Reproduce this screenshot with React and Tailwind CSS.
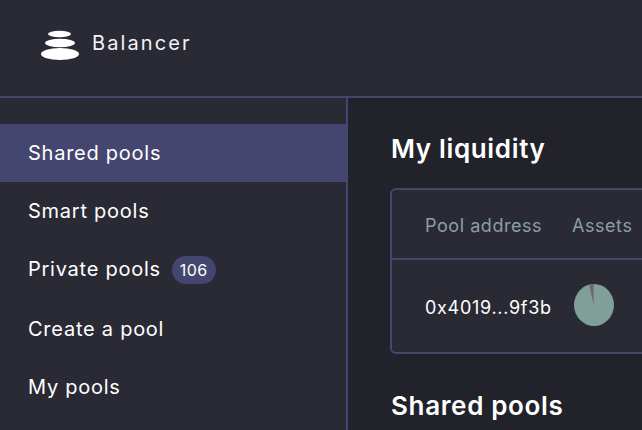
const navItems = [
  { label: "Shared pools", active: true },
  { label: "Smart pools" },
  { label: "Private pools", badge: "106" },
  { label: "Create a pool" },
  { label: "My pools" },
];

function Logo() {
  return (
    <svg width="40" height="34" viewBox="0 0 40 34" className="shrink-0">
      <ellipse cx="19.5" cy="8" rx="11.5" ry="3.2" fill="#fff" />
      <ellipse cx="20" cy="17" rx="15" ry="4.2" fill="#fff" />
      <ellipse cx="20" cy="28" rx="19" ry="6" fill="#fff" />
    </svg>
  );
}

export default function App() {
  return (
    <div className="w-[642px] h-[430px] overflow-hidden bg-[#21222a] text-white font-['Inter',sans-serif]">
      <header className="h-[98px] bg-[#2a2a35] border-b-2 border-[#45466f] pl-[40px] flex items-center gap-[12px] pb-[20px] pt-[10px]">
        <Logo />
        <span className="text-[20px] tracking-[2.1px] text-[#f2f2f4]">Balancer</span>
      </header>
      <div className="flex h-[332px]">
        <nav className="w-[348px] shrink-0 bg-[#2a2a35] border-r-2 border-[#45466f] pt-[26px]">
          {navItems.map((item) => (
            <div
              key={item.label}
              className={`pl-[28px] flex items-center gap-[11px] text-[20px] tracking-[0.75px] ${item.badge ? "h-[60px] pb-[2px]" : "h-[58px]"} ${item.active ? "bg-[#45466f]" : ""}`}
            >
              {item.label}
              {item.badge && (
                <span className="h-[28px] mt-[1px] px-[8px] rounded-full bg-[#45466f] text-[16px] tracking-[0.4px] flex items-center">
                  {item.badge}
                </span>
              )}
            </div>
          ))}
        </nav>
        <main className="flex-1 min-w-0 pl-[42px] pt-[36px]">
          <h2 className="ml-[1px] text-[26px] leading-[30px] font-semibold tracking-[0.65px]">My liquidity</h2>
          <div className="mt-[24px] w-[400px] h-[166px] bg-[#2a2a35] border-2 border-[#45466f] rounded-[6px]">
            <div className="h-[70px] flex items-center pl-[33px] pt-[3px] text-[18px] text-[#8a9ea8] tracking-[0.55px] border-b-2 border-[#45466f]">
              <span className="w-[147px]">Pool address</span>
              <span>Assets</span>
            </div>
            <div className="h-[92px] flex items-center pl-[33px] text-[18px] tracking-[0.7px]">
              <span className="w-[149px] pt-[3px]">0x4019...9f3b</span>
              <svg width="40" height="42" viewBox="0 0 40 42" className="mb-[3px]">
                <ellipse cx="20" cy="21" rx="20" ry="21" fill="#7f9f98" />
                <path d="M19.7 20.7 L15 0.6 Q17 0 19.7 0 Z" fill="#6e6d6c" />
              </svg>
            </div>
          </div>
          <h2 className="ml-[1px] mt-[37px] text-[26px] leading-[30px] font-semibold tracking-[0.65px]">Shared pools</h2>
        </main>
      </div>
    </div>
  );
}
